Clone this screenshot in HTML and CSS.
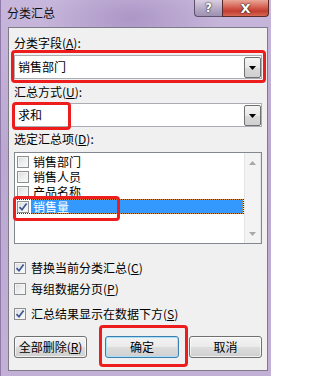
FILE: index.html
```html
<!DOCTYPE html>
<html>
<head>
<meta charset="utf-8">
<link rel="stylesheet" href="styles.css">
</head>
<body>
<div class="window">
  <div class="titlebar">
    <div class="title">分类汇总</div>
    <div class="caption-btns">
      <div class="cap help">?</div>
      <div class="cap close">X</div>
    </div>
  </div>
  <div class="client">
    <div class="label">分类字段(<u>A</u>):</div>
    <div class="combo combo-first anno anno-field">
      <span class="combo-text">销售部门</span>
      <span class="drop"><svg width="7" height="4" viewBox="0 0 7 4"><polygon points="0,0 7,0 3.5,4" fill="#000"/></svg></span>
    </div>
    <div class="label label-method">汇总方式(<u>U</u>):</div>
    <div class="combo combo-second anno anno-method">
      <span class="combo-text">求和</span>
      <span class="drop"><svg width="7" height="4" viewBox="0 0 7 4"><polygon points="0,0 7,0 3.5,4" fill="#000"/></svg></span>
    </div>
    <div class="label label-items">选定汇总项(<u>D</u>):</div>
    <div class="listbox">
      <div class="items">
        <div class="item"><span class="cb"></span><span class="txt">销售部门</span></div>
        <div class="item"><span class="cb"></span><span class="txt">销售人员</span></div>
        <div class="item"><span class="cb"></span><span class="txt">产品名称</span></div>
        <div class="item sel anno anno-item"><span class="cb checked"><svg width="10" height="10" viewBox="0 0 10 10"><path d="M1.5 5.2 L4 7.8 L8.6 1.6" fill="none" stroke="#3b5593" stroke-width="1.7"/></svg></span><span class="txt">销售量</span></div>
      </div>
      <div class="vscroll">
        <svg class="arr" width="7" height="4" viewBox="0 0 7 4"><polygon points="0,4 7,4 3.5,0" fill="#a8a8a8"/></svg>
        <svg class="arr" width="7" height="4" viewBox="0 0 7 4"><polygon points="0,0 7,0 3.5,4" fill="#a8a8a8"/></svg>
      </div>
    </div>
    <div class="opt opt-replace"><span class="cb checked"><svg width="10" height="10" viewBox="0 0 10 10"><path d="M1.5 5.2 L4 7.8 L8.6 1.6" fill="none" stroke="#3b5593" stroke-width="1.7"/></svg></span><span>替换当前分类汇总(<u>C</u>)</span></div>
    <div class="opt opt-page"><span class="cb"></span><span>每组数据分页(<u>P</u>)</span></div>
    <div class="opt opt-below"><span class="cb checked"><svg width="10" height="10" viewBox="0 0 10 10"><path d="M1.5 5.2 L4 7.8 L8.6 1.6" fill="none" stroke="#3b5593" stroke-width="1.7"/></svg></span><span>汇总结果显示在数据下方(<u>S</u>)</span></div>
    <div class="buttons">
      <div class="btn">全部删除(<u>R</u>)</div>
      <div class="btn btn-ok anno anno-ok">确定</div>
      <div class="btn btn-cancel">取消</div>
    </div>
  </div>
</div>
</body>
</html>
```

FILE: styles.css
```css
html, body {
  margin: 0;
  padding: 0;
}
body {
  width: 271px;
  height: 376px;
  overflow: hidden;
  font-family: "Noto Sans CJK SC", "Noto Sans", sans-serif;
  font-size: 12px;
  color: #000;
}
.window {
  width: 271px;
  height: 376px;
  box-sizing: border-box;
  padding: 0 3px 5px 7px;
  display: flex;
  flex-direction: column;
  border-left: 1px solid #8f7aa9;
  background:
    radial-gradient(ellipse 90px 40px at 130px 18px, rgba(150,125,180,0.55), rgba(150,125,180,0)),
    linear-gradient(180deg, #c8b7dc 0%, #bba8d0 40%, #c2b0d7 100%);
}
.titlebar {
  height: 27px;
  display: flex;
  justify-content: space-between;
  align-items: flex-start;
  margin-left: -1px;
}
.title {
  padding-top: 4px;
  line-height: 17px;
  font-size: 12px;
  color: #111;
}
.caption-btns {
  display: flex;
  margin-right: -1px;
}
.cap {
  height: 17px;
  box-sizing: border-box;
  display: flex;
  align-items: center;
  justify-content: center;
  color: #fff;
  font-family: "DejaVu Sans", sans-serif;
  font-weight: bold;
  font-size: 12px;
  line-height: 1;
  text-shadow: 0 0 2px #222, 0 0 1px #222;
}
.help {
  width: 28px;
  border: 1px solid #5d516d;
  border-top: none;
  border-right: none;
  border-radius: 0 0 0 4px;
  background: linear-gradient(180deg, #d8cfe2 0%, #b9acc8 50%, #9e91b1 100%);
}
.close {
  width: 47px;
  border: 1px solid #5a2a2a;
  border-top: none;
  border-radius: 0 0 4px 0;
  background: linear-gradient(180deg, #e9a798 0%, #d2584a 50%, #c23d30 70%, #d66a55 100%);
  font-size: 13px;
}
.client {
  flex: 1;
  position: relative;
  box-sizing: border-box;
  background: #f0f0f0;
  border: 1px solid #7f7a88;
  padding: 7px 5px 0 5px;
  display: flex;
  flex-direction: column;
}
.label {
  line-height: 16px;
  height: 16px;
}
.label-method {
  margin-top: 5px;
}
.label-items {
  margin-top: 4px;
}
.combo {
  height: 24px;
  box-sizing: border-box;
  border: 1px solid #abadb3;
  background: #fff;
  display: flex;
  align-items: stretch;
}
.combo-first {
  margin-top: 4px;
}
.combo-second {
  margin-top: 3px;
}
.combo-text {
  flex: 1;
  padding-left: 3px;
  line-height: 22px;
}
.drop {
  width: 17px;
  box-sizing: border-box;
  margin-top: 1px;
  border: 1px solid #707070;
  border-radius: 2px;
  background: linear-gradient(180deg, #f4f4f4 0%, #e8e8e8 50%, #dadada 51%, #cfcfcf 100%);
  display: flex;
  align-items: center;
  justify-content: center;
}
.anno {
  position: relative;
}
.anno::after {
  content: "";
  position: absolute;
  border: 3px solid #ee1d1d;
  border-radius: 4px;
}
.anno-field::after {
  top: -6px;
  left: -4px;
  right: -5px;
  bottom: -5px;
}
.anno-method::after {
  top: -2px;
  left: -3px;
  right: 190px;
  bottom: -4px;
}
.anno-item::after {
  top: -3px;
  left: -2px;
  right: 124px;
  bottom: -7px;
}
.anno-ok::after {
  top: -12px;
  left: -7px;
  right: -10px;
  bottom: -10px;
}
.listbox {
  margin-top: 5px;
  height: 92px;
  box-sizing: border-box;
  border: 1px solid #828790;
  background: #fff;
  display: flex;
}
.items {
  flex: 1;
  padding-top: 1px;
}
.item {
  height: 15px;
  display: flex;
  align-items: center;
  line-height: 15px;
}
.item .cb {
  margin-left: 2px;
}
.item .txt {
  margin-left: 2px;
  padding-left: 2px;
  flex: 1;
  height: 15px;
}
.item.sel {
  outline: 1px dotted #333;
  outline-offset: -1px;
}
.item.sel .txt {
  background: #3399ff;
  color: #fff;
  box-sizing: border-box;
  border: 1px dotted #d08a3a;
  border-left: none;
  line-height: 13px;
  margin-right: 1px;
}
.cb {
  width: 12px;
  height: 12px;
  box-sizing: border-box;
  border: 1px solid #8e8f8f;
  background: linear-gradient(135deg, #d6d8dc 0%, #eceef0 50%, #fbfbfb 100%);
  box-shadow: inset 0 0 0 1px #f4f4f4;
  display: flex;
  align-items: center;
  justify-content: center;
  flex: none;
}
.cb svg {
  display: block;
}
.vscroll {
  width: 17px;
  box-sizing: border-box;
  border-left: 1px solid #e4e4e4;
  border-right: 1px solid #e4e4e4;
  background: #f3f3f3;
  display: flex;
  flex-direction: column;
  justify-content: space-between;
  align-items: center;
  padding: 8px 0 7px;
}
.arr {
  display: block;
}
.opt {
  height: 16px;
  display: flex;
  align-items: center;
  line-height: 16px;
}
.opt .cb {
  margin-right: 5px;
}
.opt-replace {
  margin-top: 16px;
}
.opt-page {
  margin-top: 5px;
}
.opt-below {
  margin-top: 9px;
}
.buttons {
  margin-top: 14px;
  display: flex;
}
.btn {
  width: 73px;
  height: 22px;
  box-sizing: border-box;
  border: 1px solid #707070;
  border-radius: 3px;
  background: linear-gradient(180deg, #f3f3f3 0%, #ebebeb 48%, #dddddd 50%, #cfcfcf 100%);
  box-shadow: inset 0 0 0 1px rgba(255,255,255,0.7);
  display: flex;
  align-items: center;
  justify-content: center;
  line-height: 20px;
}
.btn-ok {
  margin-left: 18px;
  width: 74px;
  border-color: #3c7fb1;
  box-shadow: inset 0 0 0 1px #a8e1f7;
}
.btn-cancel {
  margin-left: 10px;
}
```
